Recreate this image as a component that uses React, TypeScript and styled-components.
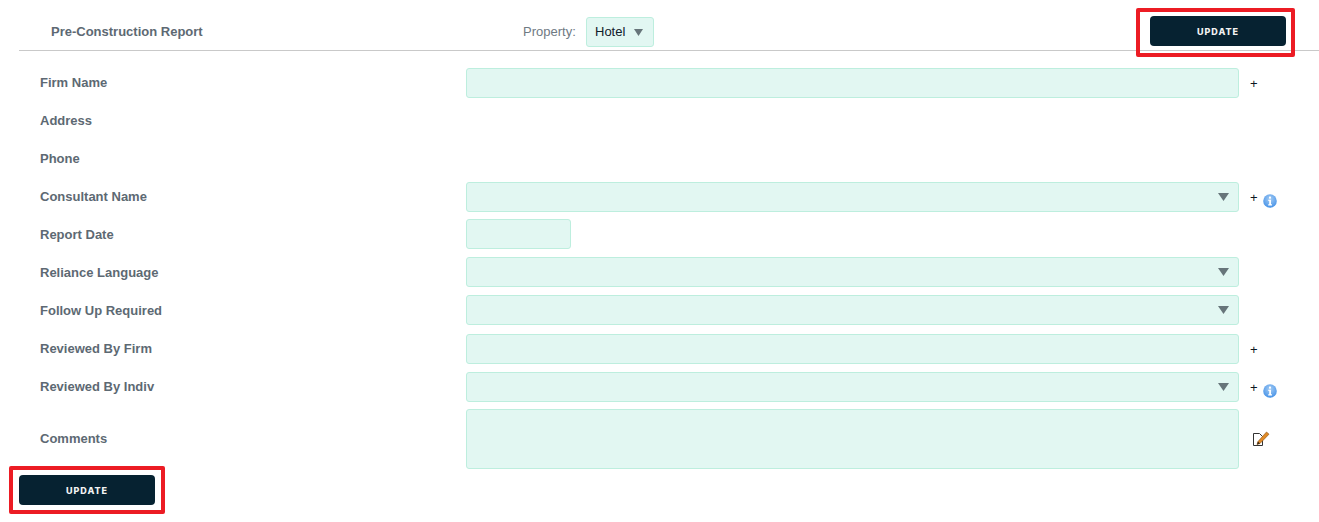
import styled, { createGlobalStyle } from "styled-components";

const GlobalStyle = createGlobalStyle`
  html, body {
    margin: 0;
    padding: 0;
    background: #fff;
    font-family: "Liberation Sans", Arial, sans-serif;
  }
`;
const Page = styled.div`
  width: 1319px;
  height: 522px;
  overflow: hidden;
  position: relative;
`;
const Header = styled.div`
  margin-left: 19px;
  border-bottom: 1px solid #c9c9c9;
  display: flex;
  align-items: center;
  padding: 13px 33px 0 32px;
  height: 37px;
`;
const Title = styled.div`
  width: 472px;
  font-size: 13px;
  font-weight: bold;
  color: #5d6973;
`;
const PropertyLabel = styled.span`
  width: 63px;
  font-size: 13px;
  color: #6f7a83;
`;
const Spacer = styled.div`
  flex: 1;
`;
const Btn = styled.button`
  position: relative;
  width: 136px;
  height: 30px;
  border: 0;
  border-radius: 4px;
  background: #062231;
  color: #f2f2f2;
  font-family: Inter, "Liberation Sans", sans-serif;
  font-size: 9px;
  font-weight: 800;
  letter-spacing: 1px;
  padding: 0;
`;
const HeaderBtn = styled(Btn)`
  margin-top: -1px;
`;
const Mark = styled.span<{ $l: number; $r: number; $t: number; $b: number }>`
  position: absolute;
  left: ${(p) => p.$l}px;
  right: ${(p) => p.$r}px;
  top: ${(p) => p.$t}px;
  bottom: ${(p) => p.$b}px;
  border: 4px solid #ec1c24;
  border-radius: 2px;
  pointer-events: none;
`;
const Form = styled.div`
  padding: 13px 0 0 40px;
  display: flex;
  flex-direction: column;
`;
// $up lifts the field one pixel, the label stays where it is
const Row = styled.div<{ $tall?: boolean; $up?: boolean }>`
  display: flex;
  align-items: center;
  height: ${(p) => (p.$tall ? "68px" : "38px")};
  & > :nth-child(2) {
    margin-top: ${(p) => (p.$up ? "-2px" : "0")};
  }
`;
const Label = styled.div<{ $up?: boolean }>`
  width: 426px;
  flex: none;
  font-size: 13px;
  font-weight: bold;
  color: #5d6973;
  margin-top: ${(p) => (p.$up ? "-3px" : "-1px")};
`;
const fieldCss = `
  box-sizing: border-box;
  display: block;
  height: 30px;
  margin: 0;
  padding: 0 8px;
  background: #e2f7f2;
  border: 1px solid #bdeede;
  border-radius: 3px;
  outline: none;
`;
const Input = styled.input<{ $w?: number }>`
  ${fieldCss}
  width: ${(p) => p.$w ?? 773}px;
`;
const TextArea = styled.textarea`
  ${fieldCss}
  width: 773px;
  height: 60px;
  resize: none;
`;
const SelectWrap = styled.div<{ $w?: number }>`
  position: relative;
  flex: none;
  width: ${(p) => p.$w ?? 773}px;
  height: 30px;
`;
const Select = styled.select`
  ${fieldCss}
  width: 100%;
  appearance: none;
  font-family: "Liberation Sans", Arial, sans-serif;
  font-size: 13px;
  color: #10202c;
`;
const Arrow = styled.svg<{ $small?: boolean }>`
  position: absolute;
  right: ${(p) => (p.$small ? "11px" : "10px")};
  top: ${(p) => (p.$small ? "12px" : "11px")};
  width: ${(p) => (p.$small ? "9px" : "11px")};
  height: ${(p) => (p.$small ? "7px" : "8px")};
  pointer-events: none;
`;
const Actions = styled.div`
  margin-left: 11px;
  display: flex;
  align-items: center;
  gap: 5px;
  height: 30px;
`;
const Plus = styled.span`
  font-size: 13px;
  line-height: 12px;
  color: #0c1722;
  width: 8px;
  margin-top: 2px;
`;
const InfoIcon = styled.svg`
  width: 14px;
  height: 14px;
  margin-top: 7px;
`;
const EditIcon = styled.svg`
  width: 18px;
  height: 16px;
  margin: -3px 0 0 2px;
`;
const Bottom = styled.div`
  padding: 1px 0 0 19px;
`;

const DownArrow = ({ small }: { small?: boolean }) => (
  <Arrow $small={small} viewBox="0 0 11 8" preserveAspectRatio="none">
    <path d="M0 0H11L5.5 8Z" fill="#67757a" />
  </Arrow>
);

const Info = () => (
  <InfoIcon viewBox="0 0 14 14">
    <defs>
      <radialGradient id="infoFill" cx="50%" cy="35%" r="70%">
        <stop offset="0" stopColor="#a6cdf5" />
        <stop offset="1" stopColor="#3f8ee6" />
      </radialGradient>
    </defs>
    <circle cx="7" cy="7" r="6.8" fill="url(#infoFill)" />
    <rect x="6" y="2.6" width="2" height="2" fill="#fff" />
    <path d="M5.3 5.8H8V10.3H9V11.4H5.2V10.3H6.2V6.9H5.3Z" fill="#fff" />
  </InfoIcon>
);

const Edit = () => (
  <EditIcon viewBox="0 0 18 16">
    <path d="M1.5 2.5H7.5L10.5 5.5V14.5H1.5Z" fill="#fff" stroke="#333" strokeWidth="1" />
    <path d="M5 13.5L6 10.5L14.5 1L17 3.2L8 12.5Z" fill="#e08a26" stroke="#8a5012" strokeWidth=".6" />
    <path d="M5 13.5L6 10.5L8 12.5Z" fill="#3a2a18" />
  </EditIcon>
);

function App() {
  return (
    <>
      <GlobalStyle />
      <Page>
        <Header>
          <Title>Pre-Construction Report</Title>
          <PropertyLabel>Property:</PropertyLabel>
          <SelectWrap $w={68}>
            <Select defaultValue="Hotel">
              <option>Hotel</option>
            </Select>
            <DownArrow small />
          </SelectWrap>
          <Spacer />
          <HeaderBtn>
            UPDATE
            <Mark $l={-14} $r={-9} $t={-8} $b={-11} />
          </HeaderBtn>
        </Header>
        <Form>
          <Row>
            <Label>Firm Name</Label>
            <Input />
            <Actions>
              <Plus>+</Plus>
            </Actions>
          </Row>
          <Row>
            <Label>Address</Label>
          </Row>
          <Row>
            <Label>Phone</Label>
          </Row>
          <Row>
            <Label>Consultant Name</Label>
            <SelectWrap>
              <Select />
              <DownArrow />
            </SelectWrap>
            <Actions>
              <Plus>+</Plus>
              <Info />
            </Actions>
          </Row>
          <Row $up>
            <Label>Report Date</Label>
            <Input $w={105} />
          </Row>
          <Row $up>
            <Label>Reliance Language</Label>
            <SelectWrap>
              <Select />
              <DownArrow />
            </SelectWrap>
          </Row>
          <Row $up>
            <Label>Follow Up Required</Label>
            <SelectWrap>
              <Select />
              <DownArrow />
            </SelectWrap>
          </Row>
          <Row>
            <Label>Reviewed By Firm</Label>
            <Input />
            <Actions>
              <Plus>+</Plus>
            </Actions>
          </Row>
          <Row>
            <Label>Reviewed By Indiv</Label>
            <SelectWrap>
              <Select />
              <DownArrow />
            </SelectWrap>
            <Actions>
              <Plus>+</Plus>
              <Info />
            </Actions>
          </Row>
          <Row $tall $up>
            <Label $up>Comments</Label>
            <TextArea />
            <Actions>
              <Edit />
            </Actions>
          </Row>
        </Form>
        <Bottom>
          <Btn>
            UPDATE
            <Mark $l={-10} $r={-10} $t={-9} $b={-9} />
          </Btn>
        </Bottom>
      </Page>
    </>
  );
}
export default App;
